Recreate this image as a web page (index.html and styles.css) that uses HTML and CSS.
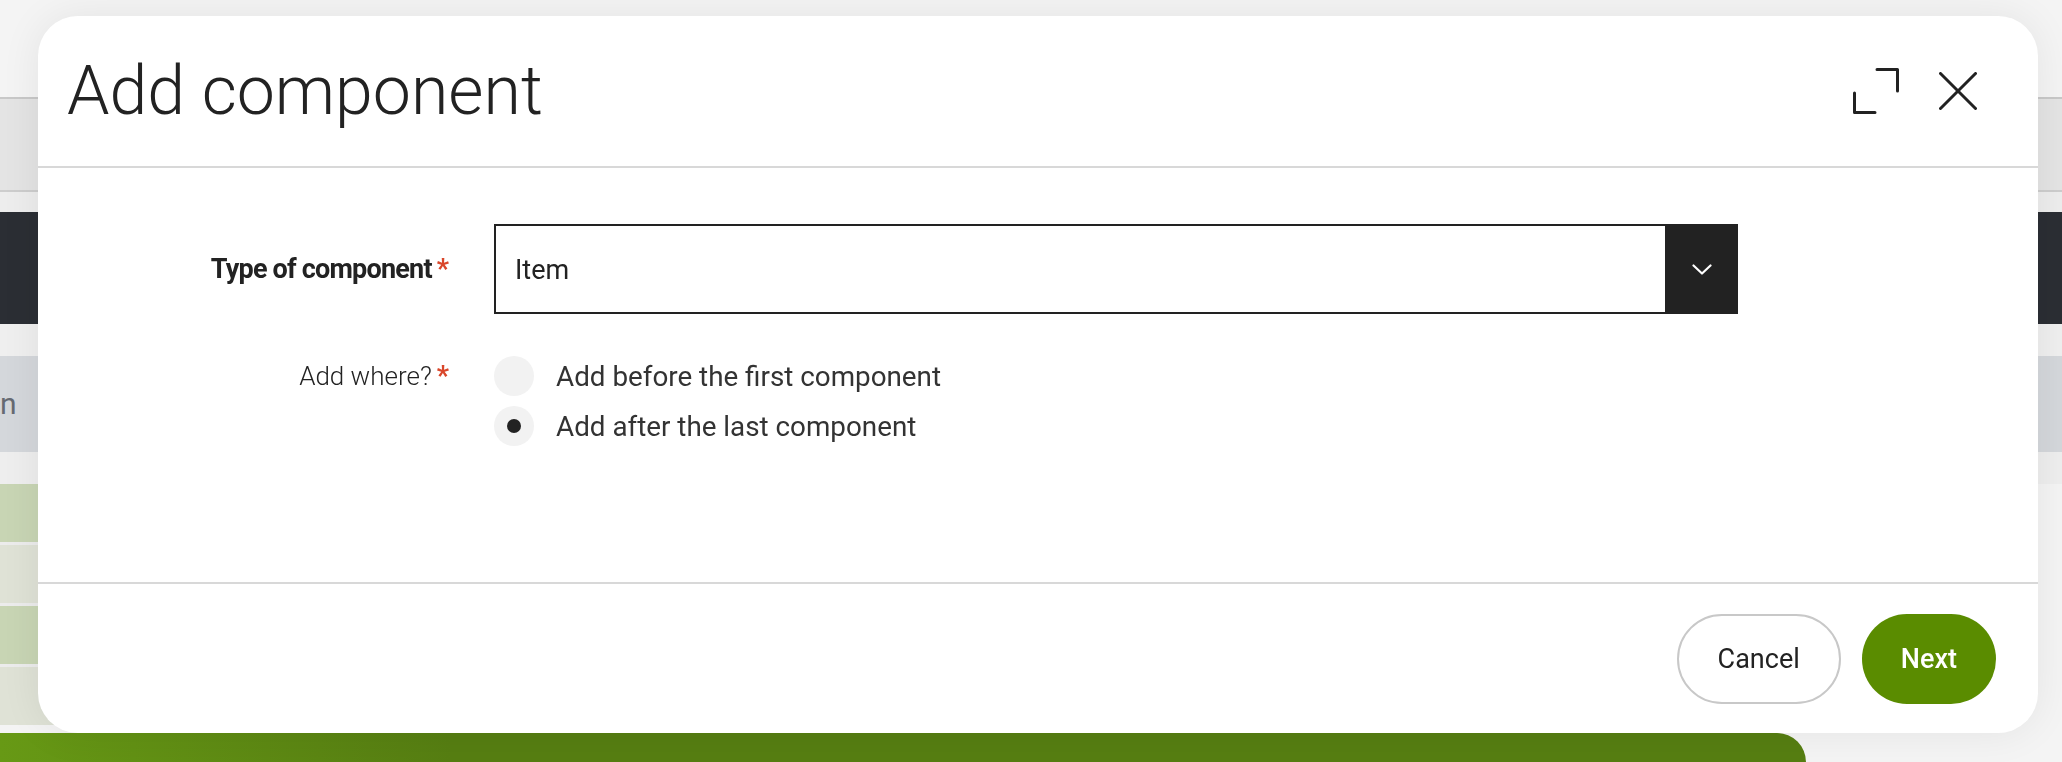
FILE: index.html
```html
<!DOCTYPE html>
<html lang="en">
<head>
<meta charset="utf-8">
<title>Add component</title>
<link rel="stylesheet" href="styles.css">
</head>
<body>
<div class="page">
  <div class="band band-top"></div>
  <div class="band band-sub"></div>
  <div class="band band-gap1"></div>
  <div class="band band-nav"></div>
  <div class="band band-gap2"></div>
  <div class="band band-tab"><span class="tab-label">n</span></div>
  <div class="band band-gap3"></div>
  <div class="rows">
    <div class="row row-a"></div>
    <div class="row row-b"></div>
    <div class="row row-a"></div>
    <div class="row row-b"></div>
  </div>
  <div class="green-bar"></div>
</div>

<div class="modal" role="dialog" aria-label="Add component">
  <div class="modal-header">
    <h1 class="modal-title">Add component</h1>
    <div class="header-actions">
      <button class="icon-btn expand" aria-label="Expand">
        <svg width="46" height="46" viewBox="0 0 46 46" fill="none" stroke="#222" stroke-width="3" stroke-linecap="round" stroke-linejoin="round">
          <path d="M1.5 25 V44.5 H22"/>
          <path d="M24 1.5 H44.5 V23"/>
        </svg>
      </button>
      <button class="icon-btn close" aria-label="Close">
        <svg width="38" height="38" viewBox="0 0 38 38" fill="none" stroke="#222" stroke-width="3" stroke-linecap="round">
          <path d="M1.5 1.5 L36.5 36.5"/>
          <path d="M36.5 1.5 L1.5 36.5"/>
        </svg>
      </button>
    </div>
  </div>
  <div class="modal-body">
    <div class="form">
      <label class="label label-strong">Type of component<span class="req">*</span></label>
      <div class="select">
        <span class="select-value">Item</span>
        <span class="select-btn">
          <svg width="20" height="11" viewBox="0 0 20 11" fill="none" stroke="#fff" stroke-width="2.2" stroke-linecap="round" stroke-linejoin="round">
            <path d="M1.5 1.5 L10 9.5 L18.5 1.5"/>
          </svg>
        </span>
      </div>
      <label class="label label-light">Add where?<span class="req">*</span></label>
      <div class="radios">
        <div class="radio-opt"><span class="radio"></span><span class="radio-text">Add before the first component</span></div>
        <div class="radio-opt"><span class="radio checked"></span><span class="radio-text">Add after the last component</span></div>
      </div>
    </div>
  </div>
  <div class="modal-footer">
    <button class="btn btn-cancel">Cancel</button>
    <button class="btn btn-next">Next</button>
  </div>
</div>
</body>
</html>
```

FILE: styles.css
```css
html, body {
  margin: 0;
  padding: 0;
  width: 2062px;
  height: 762px;
  overflow: hidden;
  background: #f4f4f4;
  font-family: Roboto, "Liberation Sans", Arial, sans-serif;
}

.page {
  display: flex;
  flex-direction: column;
  height: 762px;
}

.band { flex: none; }
.band-top { height: 97px; background: #f4f4f4; border-bottom: 2px solid #c8c8c8; }
.band-sub { height: 91px; background: #e4e4e4; border-bottom: 2px solid #cdcdcd; }
.band-gap1 { height: 20px; background: #ededed; }
.band-nav { height: 112px; background: #2b2e34; }
.band-gap2 { height: 32px; background: #efefef; }
.band-tab {
  height: 96px;
  background: #d4d7db;
  display: flex;
  align-items: center;
}
.tab-label {
  font-size: 30px;
  line-height: 1;
  color: #666a72;
}
.band-gap3 { height: 32px; background: #eeeeee; }

.rows {
  display: flex;
  flex-direction: column;
  gap: 3px;
  width: 1800px;
  background: #ececec;
  flex: none;
}
.row { height: 58px; }
.row-a { background: #c8d5b4; }
.row-b { background: #dfe2d6; }

.green-bar {
  margin-top: auto;
  height: 29px;
  width: 1806px;
  border-top-right-radius: 40px;
  background: linear-gradient(90deg, #679915 0%, #567e12 25%, #567e12 100%);
}

/* Modal */
.modal {
  position: fixed;
  top: 16px;
  left: 38px;
  width: 2000px;
  height: 717px;
  background: #fff;
  border-radius: 40px;
  box-shadow: 0 0 40px rgba(0, 0, 0, 0.07);
  display: flex;
  flex-direction: column;
  overflow: hidden;
}

.modal-header {
  height: 150px;
  border-bottom: 2px solid #d8d8d8;
  display: flex;
  align-items: center;
  justify-content: space-between;
  padding: 0 61px 0 29px;
  flex: none;
}

.modal-title {
  margin: 0;
  font-family: Roboto, "Liberation Sans", sans-serif;
  font-weight: 300;
  font-size: 68px;
  line-height: 1;
  color: #222;
}

.header-actions {
  display: flex;
  align-items: center;
  gap: 40px;
}

.icon-btn {
  border: 0;
  background: none;
  padding: 0;
  margin: 0;
  display: flex;
  cursor: pointer;
}

.modal-body {
  flex: 1;
  padding-top: 56px;
}

.form {
  display: grid;
  grid-template-columns: 411px 1244px;
  column-gap: 45px;
  row-gap: 42px;
  align-items: center;
}

.label {
  text-align: right;
  font-size: 27px;
  color: #222;
  white-space: nowrap;
}
.label-strong {
  font-weight: 700;
  letter-spacing: -0.8px;
}
.label-light {
  font-weight: 300;
  font-size: 26px;
  align-self: start;
  line-height: 40px;
  color: #222;
}
.req {
  color: #d9472b;
  font-weight: 700;
  font-size: 27px;
  margin-left: 5px;
  letter-spacing: 0;
}

.select {
  height: 90px;
  box-sizing: border-box;
  border: 2px solid #222;
  display: flex;
  align-items: stretch;
}
.select-value {
  flex: 1;
  display: flex;
  align-items: center;
  padding-left: 19px;
  padding-top: 2px;
  font-size: 27px;
  color: #222;
}
.select-btn {
  width: 73px;
  background: #222;
  display: flex;
  align-items: center;
  justify-content: center;
  margin: -2px -2px -2px 0;
}

.radios {
  display: flex;
  flex-direction: column;
  gap: 10px;
}
.radio-opt {
  display: flex;
  align-items: center;
  gap: 22px;
  height: 40px;
}
.radio {
  width: 40px;
  height: 40px;
  border-radius: 50%;
  background: #f2f2f2;
  display: flex;
  align-items: center;
  justify-content: center;
  flex: none;
}
.radio.checked::after {
  content: "";
  width: 14px;
  height: 14px;
  border-radius: 50%;
  background: #222;
}
.radio-text {
  font-size: 27.8px;
  color: #333;
}

.modal-footer {
  flex: none;
  height: 119px;
  border-top: 2px solid #d8d8d8;
  padding: 30px 42px 0 0;
  display: flex;
  justify-content: flex-end;
  align-items: flex-start;
  gap: 21px;
}

.btn {
  height: 90px;
  border-radius: 45px;
  padding: 0 39px;
  font-family: Roboto, "Liberation Sans", sans-serif;
  font-size: 27px;
  cursor: pointer;
}
.btn-cancel {
  background: #fff;
  border: 2px solid #c8c8c8;
  color: #222;
  font-weight: 400;
}
.btn-next {
  background: #5a8c00;
  border: 0;
  color: #fff;
  font-weight: 500;
}
```
